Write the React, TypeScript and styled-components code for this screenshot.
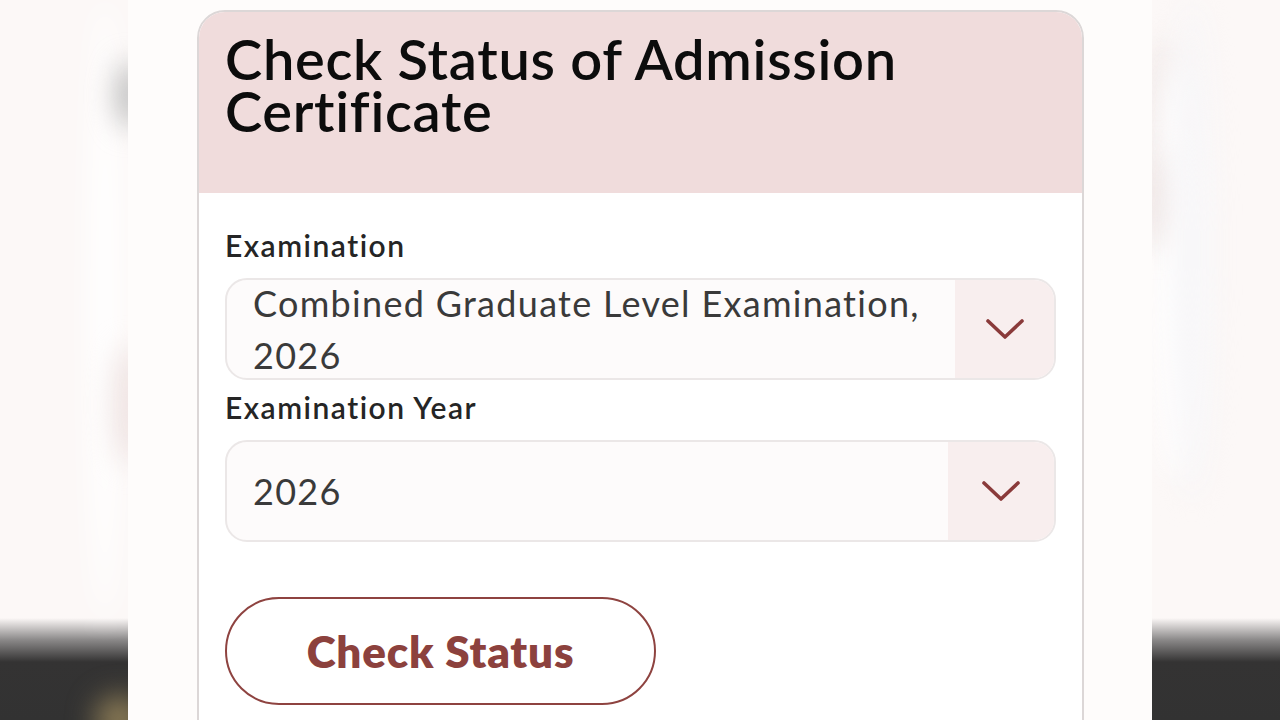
import styled, { createGlobalStyle } from "styled-components";

const GlobalStyle = createGlobalStyle`
  html, body {
    margin: 0;
    padding: 0;
    overflow: hidden;
  }
  body {
    font-family: Lato, "Open Sans", "Noto Sans", sans-serif;
    background: #fcf8f7;
  }
`;

const SStage = styled.div`
  display: flex;
  width: 1280px;
  height: 720px;
  overflow: hidden;
`;

const SSide = styled.div`
  position: relative;
  flex: 0 0 128px;
  height: 100%;
  overflow: hidden;
  background: linear-gradient(
    to bottom,
    #fcf8f7 0,
    #fcf8f7 618px,
    #8a8888 640px,
    #343333 662px,
    #323232 100%
  );
`;

const SBlob = styled.div<{ $x: number; $y: number; $w: number; $h: number; $c: string }>`
  position: absolute;
  left: ${(p) => p.$x}px;
  top: ${(p) => p.$y}px;
  width: ${(p) => p.$w}px;
  height: ${(p) => p.$h}px;
  background: ${(p) => p.$c};
  border-radius: 50%;
  filter: blur(14px);
`;

const SColumn = styled.main`
  flex: 0 0 1024px;
  height: 100%;
  background: #fefcfb;
  padding: 10px 0 0 69px;
  box-sizing: border-box;
`;

const SCard = styled.section`
  width: 887px;
  height: 760px;
  box-sizing: border-box;
  border: 2px solid #dcd7d7;
  border-radius: 28px;
  overflow: hidden;
  background: #ffffff;
`;

const SHeader = styled.header`
  height: 181px;
  box-sizing: border-box;
  background: #f0dcdc;
  padding: 21px 26px 0;
`;

const STitle = styled.h1`
  margin: 0;
  font-size: 56px;
  line-height: 52px;
  font-weight: 600;
  color: #0c0c0c;
  letter-spacing: 0.7px;
`;

const SBody = styled.div`
  display: flex;
  flex-direction: column;
  align-items: flex-start;
  padding: 32px 26px 0;
`;

const SLabel = styled.label`
  font-size: 30px;
  line-height: 40px;
  font-weight: 600;
  color: #252525;
  letter-spacing: 1.5px;
  margin-bottom: 13px;
`;

const SSelect = styled.div<{ $arrow: number }>`
  display: flex;
  width: 831px;
  height: 102px;
  box-sizing: border-box;
  border: 2px solid #ebe7e7;
  border-radius: 22px;
  background: #fdfbfb;
  overflow: hidden;
  margin-bottom: 7px;

  & > span:last-child {
    flex: 0 0 ${(p) => p.$arrow}px;
  }
`;

const SValue = styled.span`
  flex: 1;
  display: flex;
  align-items: center;
  padding: 0 24px 0 26px;
  font-size: 36px;
  line-height: 52px;
  letter-spacing: 1.3px;
  color: #3a3a3a;
`;

const SArrow = styled.span`
  display: flex;
  align-items: center;
  justify-content: center;
  background: #f8eeee;
  color: #8a3a3a;
`;

const SButton = styled.button`
  margin-top: 48px;
  width: 431px;
  height: 108px;
  border: 2.5px solid #8e4340;
  border-radius: 54px;
  background: #ffffff;
  color: #8c413d;
  font-family: Lato, "Open Sans", sans-serif;
  font-size: 44px;
  font-weight: 800;
  letter-spacing: 0.8px;
  cursor: pointer;
`;

const Chevron = () => (
  <svg width="40" height="22" viewBox="0 0 40 22" fill="none">
    <path
      d="M3 3 L20 19 L37 3"
      stroke="currentColor"
      strokeWidth="3.6"
      strokeLinecap="round"
      strokeLinejoin="round"
    />
  </svg>
);

const Select = ({ value, arrow }: { value: string; arrow: number }) => (
  <SSelect $arrow={arrow}>
    <SValue>{value}</SValue>
    <SArrow>
      <Chevron />
    </SArrow>
  </SSelect>
);

const App = () => {
  return (
    <>
      <GlobalStyle />
      <SStage>
        <SSide>
          <SBlob $x={90} $y={0} $w={30} $h={620} $c="#ffffff" />
          <SBlob $x={116} $y={62} $w={30} $h={66} $c="#bcbcbc" />
          <SBlob $x={114} $y={345} $w={34} $h={120} $c="#eee2e1" />
          <SBlob $x={95} $y={695} $w={50} $h={50} $c="#8a7a55" />
        </SSide>
        <SColumn>
          <SCard>
            <SHeader>
              <STitle>Check Status of Admission Certificate</STitle>
            </SHeader>
            <SBody>
              <SLabel>Examination</SLabel>
              <Select value="Combined Graduate Level Examination, 2026" arrow={99} />
              <SLabel>Examination Year</SLabel>
              <Select value="2026" arrow={106} />
              <SButton>Check Status</SButton>
            </SBody>
          </SCard>
        </SColumn>
        <SSide>
          <SBlob $x={-10} $y={40} $w={40} $h={200} $c="#f1e9e8" />
          <SBlob $x={0} $y={60} $w={50} $h={420} $c="#ffffff" />
          <SBlob $x={-10} $y={150} $w={30} $h={100} $c="#efe6e5" />
          <SBlob $x={20} $y={0} $w={40} $h={500} $c="#f7f6f8" />
        </SSide>
      </SStage>
    </>
  );
};

export default App;
